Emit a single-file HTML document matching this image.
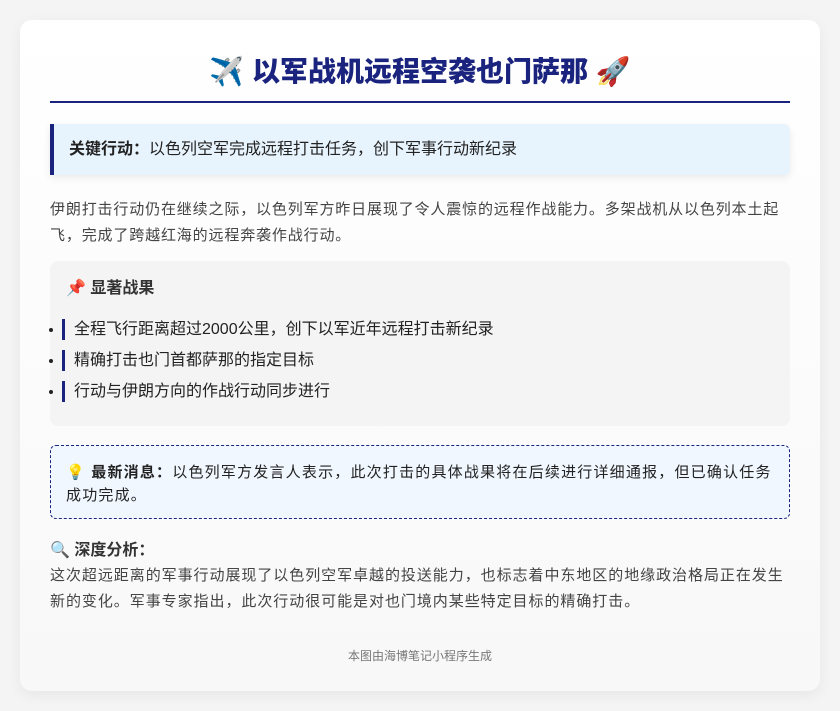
<!DOCTYPE html>
<html><head><meta charset="utf-8"><style>
*{margin:0;padding:0;box-sizing:border-box}
body{width:840px;height:711px;background:#f4f4f4;font-family:"Liberation Sans","Noto Sans CJK SC",sans-serif;color:#333;position:relative;overflow:hidden}
.card{position:absolute;left:20px;top:20px;width:800px;height:671px;border-radius:12px;background:linear-gradient(180deg,#fff,#f8f8f8);box-shadow:0 4px 14px rgba(0,0,0,.06);padding:0 30px}
h1{position:absolute;left:30px;right:30px;top:31px;text-align:center;font-size:28px;font-weight:900;color:#1a237e;line-height:42px}
.hr{position:absolute;left:30px;right:30px;top:81px;height:2px;background:#1a237e}
.key{position:absolute;left:30px;right:30px;top:104px;height:51px;background:#e8f4fd;border-left:4px solid #1a237e;border-radius:0 6px 6px 0;box-shadow:0 3px 8px rgba(0,0,0,.08);font-size:16px;line-height:51px;padding-left:15px;color:#222}
.p{position:absolute;left:30px;width:742px;top:177px;font-size:15px;letter-spacing:0.85px;line-height:26px;color:#444}
.res{position:absolute;left:30px;right:30px;top:241px;height:165px;background:#f4f4f4;border-radius:8px}
.res h3{position:absolute;left:16px;top:16px;font-size:16px;font-weight:bold;color:#333;line-height:24px}
.res ul{position:absolute;left:0;top:58px;list-style:disc;padding-left:14px}
.res li{font-size:16px;line-height:21px;margin-bottom:10px;color:#222}
.res li span{display:inline-block;border-left:3px solid #1a237e;padding-left:9px;margin-left:-2px}
.news{position:absolute;left:30px;right:30px;top:425px;height:74px;background:#f0f7ff;border:1px dashed #1a237e;border-radius:6px;padding:15px 10px 0 15px;font-size:15px;letter-spacing:1.2px;line-height:23px;color:#222}
.an{position:absolute;left:30px;width:742px;top:519px;font-size:15px;letter-spacing:0.95px;color:#444}
.an h4{font-size:16px;letter-spacing:0;font-weight:bold;line-height:24px;color:#333}
.an p{line-height:26px}
.ft{position:absolute;left:0;right:0;top:627px;text-align:center;font-size:12px;color:#777}
</style></head><body><div class="card">
<h1>✈️ 以军战机远程空袭也门萨那 🚀</h1>
<div class="hr"></div>
<div class="key"><b>关键行动：</b>以色列空军完成远程打击任务，创下军事行动新纪录</div>
<div class="p">伊朗打击行动仍在继续之际，以色列军方昨日展现了令人震惊的远程作战能力。多架战机从以色列本土起飞，完成了跨越红海的远程奔袭作战行动。</div>
<div class="res"><h3>📌 显著战果</h3>
<ul><li><span>全程飞行距离超过2000公里，创下以军近年远程打击新纪录</span></li><li><span>精确打击也门首都萨那的指定目标</span></li><li><span>行动与伊朗方向的作战行动同步进行</span></li></ul></div>
<div class="news">💡 <b>最新消息：</b>以色列军方发言人表示，此次打击的具体战果将在后续进行详细通报，但已确认任务成功完成。</div>
<div class="an"><h4>🔍 深度分析：</h4><p>这次超远距离的军事行动展现了以色列空军卓越的投送能力，也标志着中东地区的地缘政治格局正在发生新的变化。军事专家指出，此次行动很可能是对也门境内某些特定目标的精确打击。</p></div>
<div class="ft">本图由海博笔记小程序生成</div>
</div></body></html>
